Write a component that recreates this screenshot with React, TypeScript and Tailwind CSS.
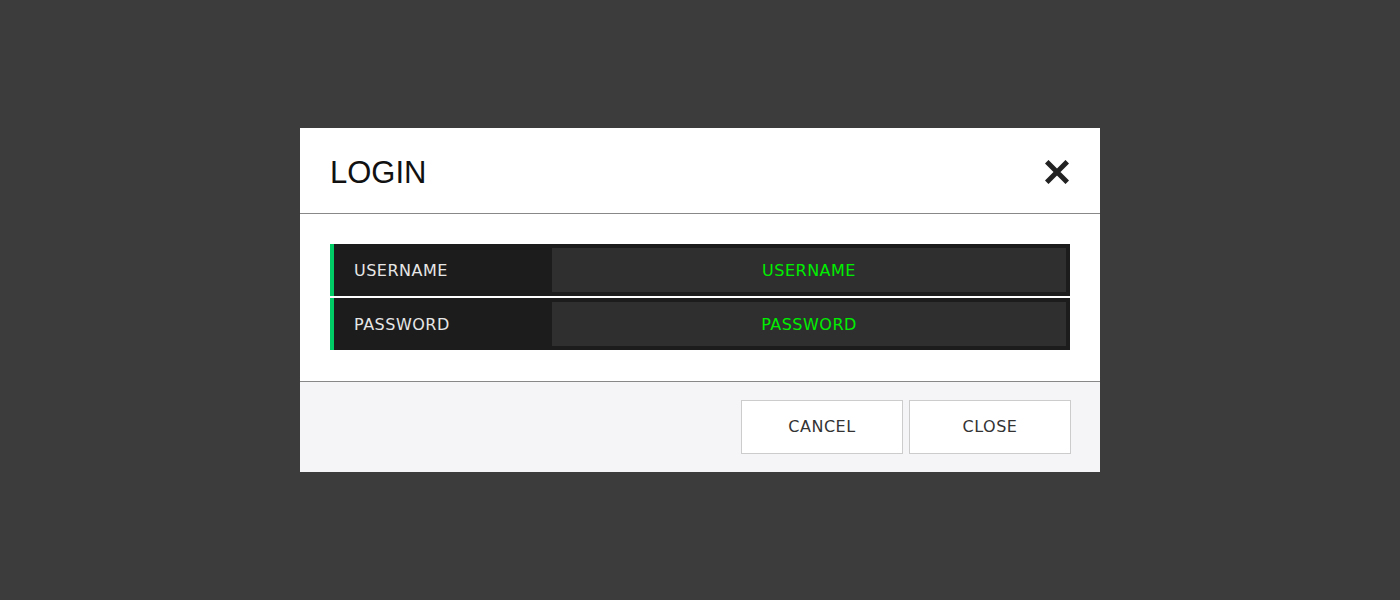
export default function App() {
  return (
    <div className="min-h-[600px] w-full bg-[#3c3c3c] flex items-center justify-center" style={{ fontFamily: '"DejaVu Sans", sans-serif' }}>
      <div className="w-[800px] bg-white flex flex-col">
        <div className="h-[86px] flex items-center justify-between pl-[30px] pr-[30px] pt-[2px] border-b border-[#888888]">
          <div className="text-[31px] text-[#111111] pt-[3px]" style={{ fontFamily: '"Liberation Sans", Arial, sans-serif' }}>LOGIN</div>
          <svg width="24" height="24" viewBox="0 0 24 24" className="mr-[1px]">
            <path d="M3.5 3.5 L20.5 20.5 M20.5 3.5 L3.5 20.5" stroke="#222222" strokeWidth="5" strokeLinecap="square" />
          </svg>
        </div>
        <div className="pt-[30px] pb-[31px] px-[30px] flex flex-col gap-[2px] border-b border-[#888888]">
          {["USERNAME", "PASSWORD"].map((l) => (
            <div key={l} className="h-[52px] flex bg-[#1c1c1c] border-l-4 border-[#00cc66] p-[4px] pl-0">
              <div className="w-[218px] flex items-center pl-[20px] pt-[1px] text-[16px] tracking-[0.5px] text-[#e6e6e6]">{l}</div>
              <div className="flex-1 bg-[#2f2f2f] flex items-center justify-center pt-[1px] text-[16px] tracking-[0.5px] text-[#00ee00]">{l}</div>
            </div>
          ))}
        </div>
        <div className="h-[90px] bg-[#f5f5f7] flex items-center justify-end gap-[6px] pr-[29px]">
          <button className="w-[162px] h-[54px] bg-white border border-[#cccccc] text-[16px] tracking-[0.5px] text-[#333333]">CANCEL</button>
          <button className="w-[162px] h-[54px] bg-white border border-[#cccccc] text-[16px] tracking-[0.5px] text-[#333333]">CLOSE</button>
        </div>
      </div>
    </div>
  );
}
